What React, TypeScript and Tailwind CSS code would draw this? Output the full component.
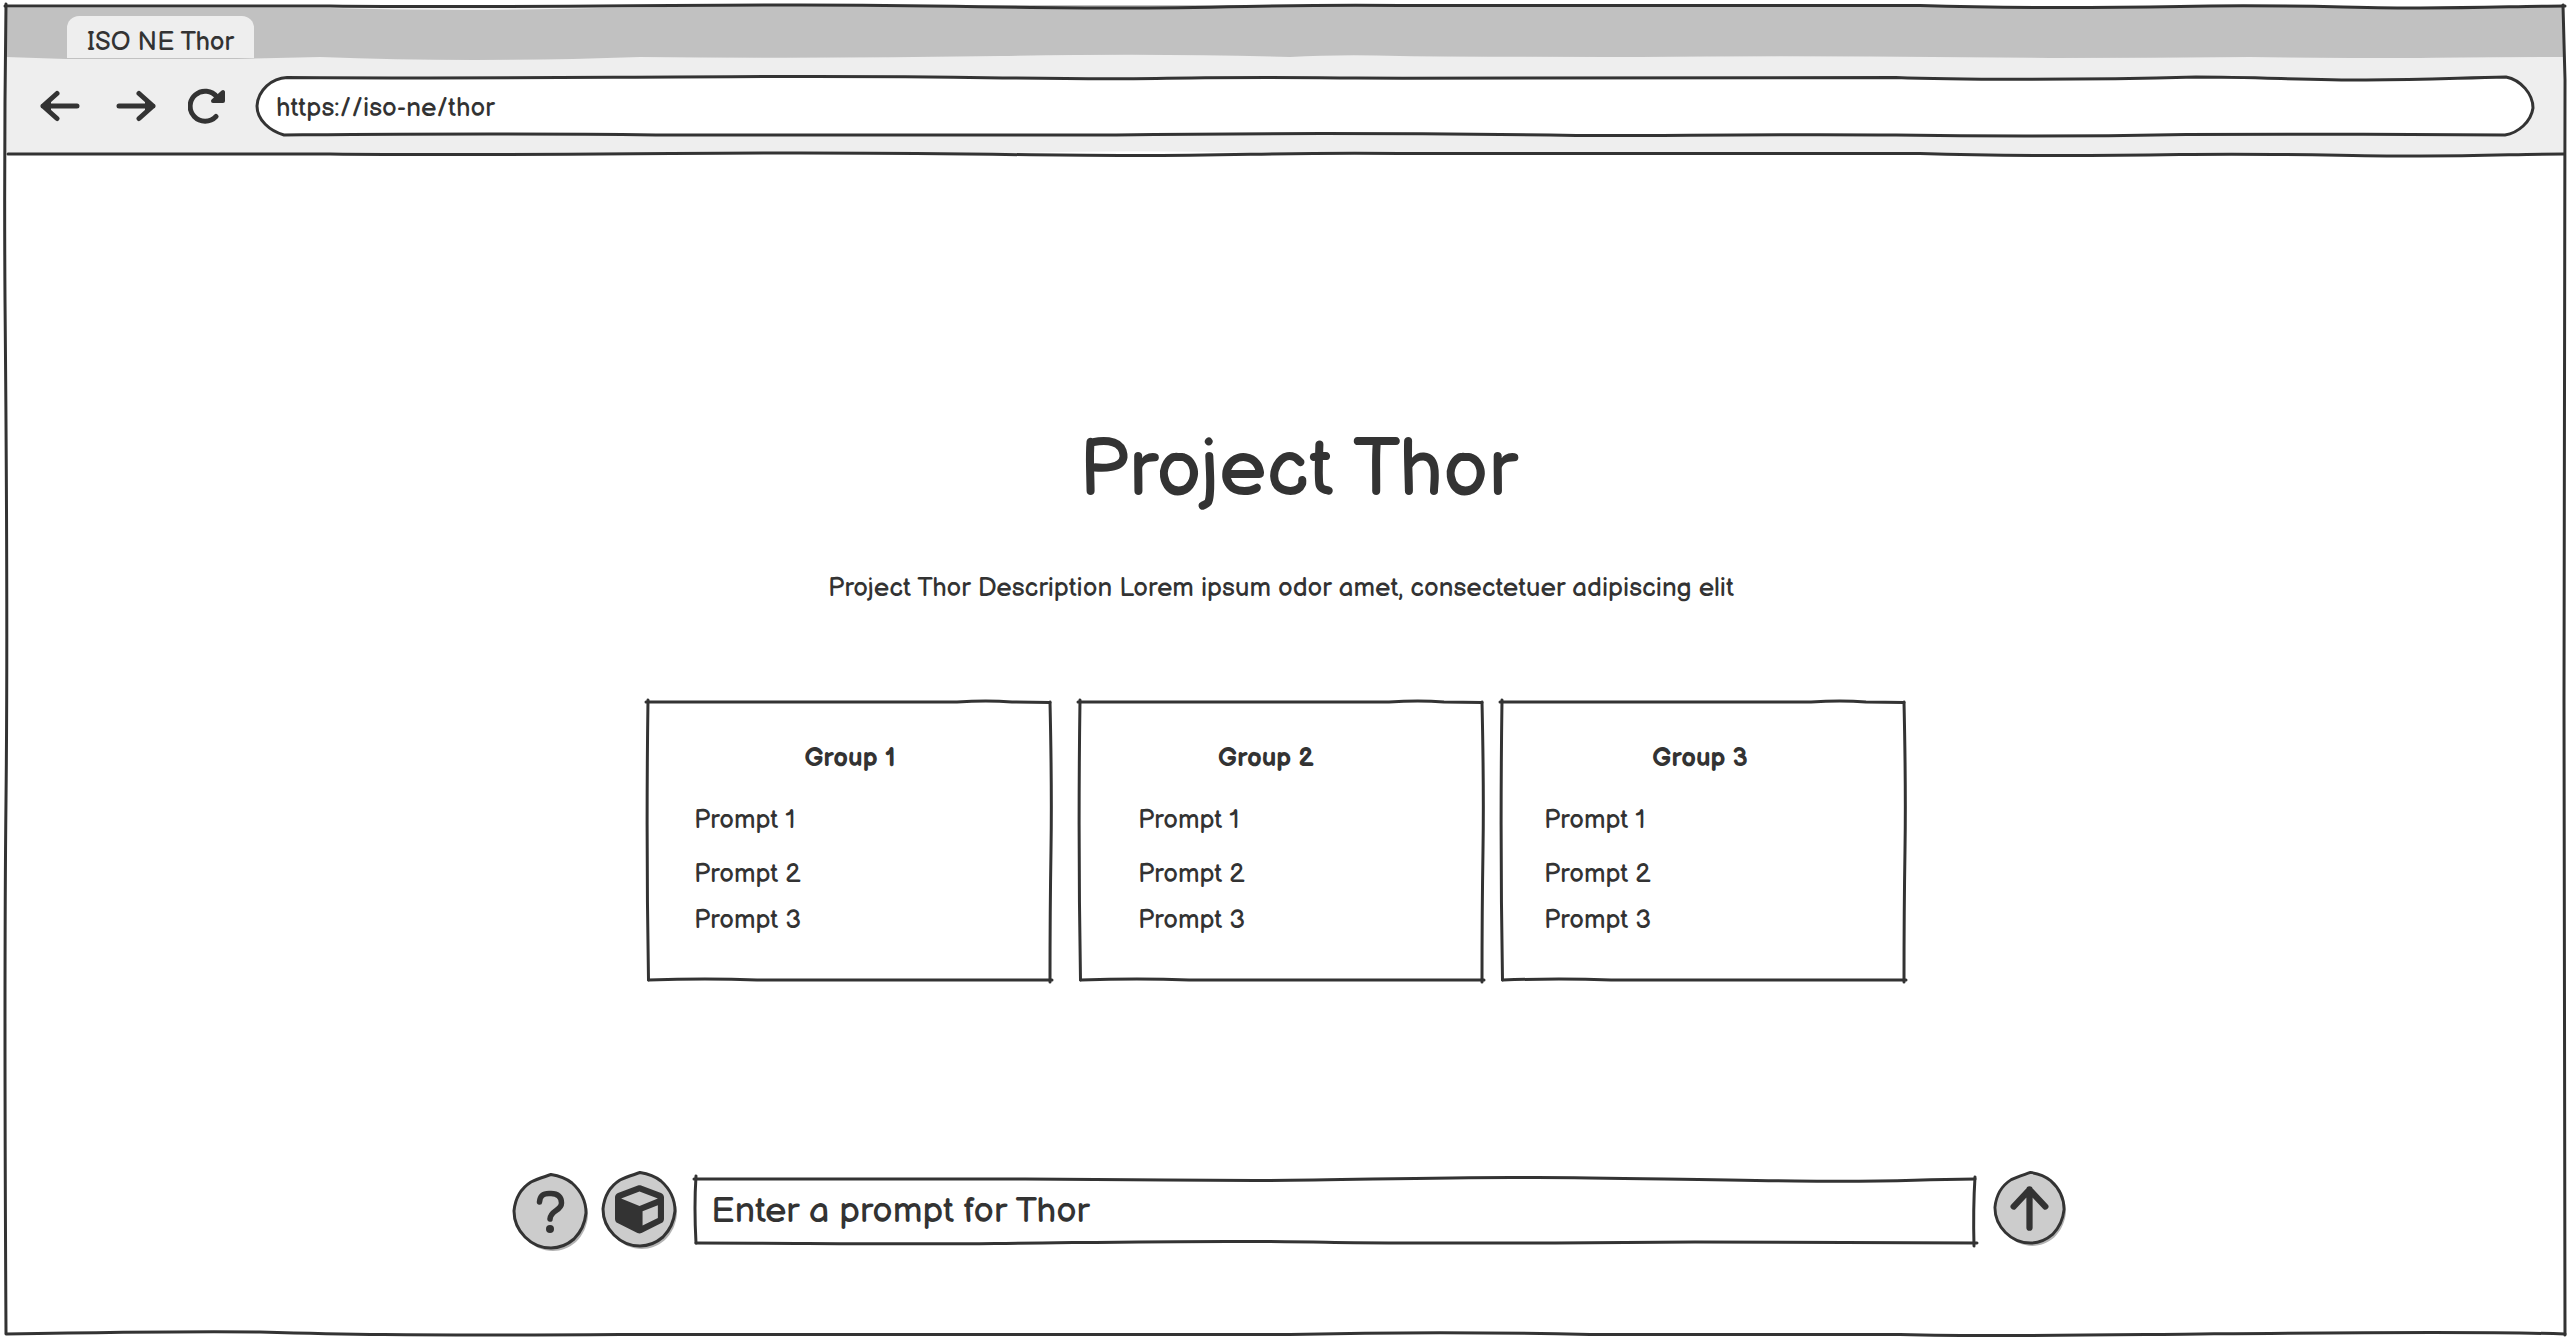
import type { ReactNode } from 'react';

const INK = '#333333';

type SketchProps = { viewBox: string; children: ReactNode };

/* Hand-drawn strokes laid over the box that contains them. */
function Sketch({ viewBox, children }: SketchProps) {
  return (
    <svg
      aria-hidden="true"
      viewBox={viewBox}
      preserveAspectRatio="none"
      fill="none"
      stroke={INK}
      strokeWidth="3"
      strokeLinecap="round"
      strokeLinejoin="round"
      className="pointer-events-none absolute inset-0 h-full w-full overflow-visible"
    >
      {children}
    </svg>
  );
}

function BackIcon() {
  return (
    <svg aria-hidden="true" viewBox="0 0 40 40" className="size-10" fill="none" stroke={INK} strokeWidth="5" strokeLinecap="round" strokeLinejoin="round">
      <path d="M3 20H37M17 7.5L3 20L17 32.5" />
      <path d="M3 20L10 14V26Z" fill={INK} strokeWidth="2" />
    </svg>
  );
}

function ForwardIcon() {
  return (
    <svg aria-hidden="true" viewBox="0 0 40 40" className="size-10" fill="none" stroke={INK} strokeWidth="5" strokeLinecap="round" strokeLinejoin="round">
      <path d="M37 20H3M23 7.5L37 20L23 32.5" />
      <path d="M37 20L30 14V26Z" fill={INK} strokeWidth="2" />
    </svg>
  );
}

function ReloadIcon() {
  return (
    <svg aria-hidden="true" viewBox="0 0 40 40" className="size-10" fill="none" stroke={INK} strokeWidth="5" strokeLinecap="round" strokeLinejoin="round">
      <path d="M28 30.5A15 15 0 1 1 29 11" />
      <path d="M35 6V15H25Z" fill={INK} strokeWidth="4" />
    </svg>
  );
}

type RoundProps = { label: string; size: string; type?: 'button' | 'submit'; children: ReactNode };

function RoundButton({ label, size, type = 'button', children }: RoundProps) {
  return (
    <button type={type} aria-label={label} className={'shrink-0 cursor-pointer ' + size}>
      <svg aria-hidden="true" viewBox="0 0 76 78" className="h-full w-full overflow-visible" fill="none">
        <path d="M39 3C49 4 55 7 60 11C69 19 74 30 74 41C73 51 69 60 62 67C55 73 47 76 39 76C29 76 20 72 13 65C6 58 2 49 2 39C3 28 8 17 19 10Z" fill="#b3b3b3" transform="translate(2 3)" />
        <path d="M39 2.5C49 4 55 7 60 11C69 19 74 30 74 41C73 51 69 60 62 67C55 73 47 76 39 76C29 76 20 72 13 65C6 58 2 49 2 39C3 28 8 17 19 10C25 7 32 5 39 2.5Z" fill="#cccccc" stroke={INK} strokeWidth="3" strokeLinejoin="round" />
        {children}
      </svg>
    </button>
  );
}

const groups = [
  { name: 'Group 1', box: 'mr-7', title: 'pl-0.5', list: 'pl-[46px]' },
  { name: 'Group 2', box: 'mr-[18px]', title: 'pr-[30px]', list: 'pl-[58px]' },
  { name: 'Group 3', box: '', title: 'pr-[6px]', list: 'pl-[42px]' },
];

function GroupCard({ name, box, title, list }: (typeof groups)[number]) {
  return (
    <section className={'relative w-[404px] px-px pt-[41px] pb-[41px] ' + box}>
      <Sketch viewBox="0 0 404 280">
        <path d="M-1 2H310Q340 0 365 2L403 2.5" />
        <path d="M1 0Q-1 140 1.5 280" />
        <path d="M403 2Q405 90 404 150T403 282" />
        <path d="M1.5 280Q60 278 110 280H405" />
      </Sketch>
      <h2 className={'text-center text-[26px] leading-9 font-bold ' + title}>{name}</h2>
      <ul className={'mt-[26px] text-[26px] leading-9 ' + list}>
        <li><a href="#prompt-1">Prompt 1</a></li>
        <li className="mt-[18px]"><a href="#prompt-2">Prompt 2</a></li>
        <li className="mt-2.5"><a href="#prompt-3">Prompt 3</a></li>
      </ul>
    </section>
  );
}

export default function App() {
  return (
    <div className="relative flex min-h-screen flex-col bg-white font-['Balsamiq_Sans','Lato',sans-serif] font-normal text-[#333333]">
      <header className="relative">
        <svg aria-hidden="true" viewBox="0 0 2570 154" preserveAspectRatio="none" className="absolute inset-0 h-full w-full">
          <path d="M6 8H2563V154H1290Q1150 149 1010 153H6Z" fill="#eeeeee" />
          <path d="M6 8H330Q460 12 600 8L800 5H1920L2100 8L2240 5L2420 8L2563 6V57Q2480 57 2420 58Q2330 58 2250 57Q2150 58 2050 58Q1800 55 1640 57Q1480 57 1400 56Q1340 54 1290 57Q1160 53 1000 56Q820 59 640 57Q470 63 320 57L237 59H66L6 57Z" fill="#c1c1c1" />
        </svg>
        <div className="relative flex h-[58px] items-end pl-[67px]">
          <div className="flex h-[42px] w-[187px] items-center justify-center rounded-t-xl bg-[#eeeeee] pt-3 text-[26px] leading-9">
            ISO NE Thor
          </div>
        </div>
        <nav aria-label="Browser" className="relative flex h-24 items-center pr-9 pl-10">
          <button type="button" aria-label="Back" className="mr-9 cursor-pointer"><BackIcon /></button>
          <button type="button" aria-label="Forward" className="mr-8 cursor-pointer"><ForwardIcon /></button>
          <button type="button" aria-label="Reload" className="mr-7 cursor-pointer"><ReloadIcon /></button>
          <div className="relative h-[60px] flex-1">
            <Sketch viewBox="0 0 2278 60">
              <path
                d="M31 1.5C250 3 330 1 530 0.5S780 4 900 2.5S980 1 1100 2S1300 0.5 1640 1.5C1700 4 1830 4 1940 1C2000 1 2050 4 2110 4S2200 2 2250 1C2265 4 2277 18 2277 32C2275 46 2262 57 2249 59C2150 58 2020 58 1930 58.5C1800 61 1700 60 1640 59C1500 58 1400 60 1320 59.5C1150 57 1000 57 860 59C600 60 500 59 400 59C250 57 150 58 28 59C14 55 1 44 1 30C2 14 16 2 31 1.5Z"
                fill="#ffffff"
              />
            </Sketch>
            <input
              aria-label="Address"
              defaultValue="https://iso-ne/thor"
              className="relative h-full w-full bg-transparent px-5 pt-1 text-[26px] leading-9 outline-none"
            />
          </div>
        </nav>
      </header>

      <main className="flex flex-1 flex-col items-center">
        <h1 className="mt-[269px] pl-[26px] text-[80px] leading-[96px]">Project Thor</h1>
        <p className="mt-[52px] pr-2 text-[26px] leading-9">
          Project Thor Description Lorem ipsum odor amet, consectetuer adipiscing elit
        </p>
        <div className="mt-[93px] flex pr-[18px]">
          {groups.map((group) => (
            <GroupCard key={group.name} {...group} />
          ))}
        </div>

        <form className="mt-[190px] flex w-full max-w-[1562px] items-start pl-2" onSubmit={(event) => event.preventDefault()}>
          <RoundButton label="Help" size="mt-0.5 mr-[13px] h-[78px] w-[76px]">
            <path d="M27.5 30C28 24 31 21.5 37 21.5H39C46 21.5 49.5 25 49.5 31C49.5 39 38.5 38 38 47" stroke={INK} strokeWidth="5.5" strokeLinecap="round" />
            <circle cx="38" cy="57" r="4" fill={INK} />
          </RoundButton>
          <RoundButton label="Models" size="mr-[18px] h-[78px] w-[76px]">
            <path
              transform="translate(14 15) scale(0.0957)"
              fill={INK}
              d="M239.1 6.3l-208 78c-18.7 7-31.1 25-31.1 45v225.1c0 18.2 10.3 34.8 26.5 42.9l208 104c13.5 6.8 29.4 6.8 42.9 0l208-104c16.3-8.1 26.5-24.8 26.5-42.9V129.3c0-20-12.4-37.9-31.1-44.9l-208-78C262 2.2 250 2.2 239.1 6.3zM256 68.4l192 72v1.1l-192 78-192-78v-1.1l192-72zm32 356V275.5l160-65v133.9l-160 80z"
            />
          </RoundButton>
          <div className="relative mt-[7px] mr-[17px] h-[68px] flex-1">
            <Sketch viewBox="0 0 1281 68">
              <path d="M-1 2H330C420 2 480 3.5 560 3.5S740 0 830 0.5C900 0 990 3 1100 4S1200 3 1280 2" />
              <path d="M1 -1Q-1 30 1 66" />
              <path d="M1 66C100 66 200 67.5 300 66.5S470 64 560 64.5S620 66 720 66S900 66 1000 65T1282 66" />
              <path d="M1280 0Q1278 32 1279 69" />
            </Sketch>
            <input
              aria-label="Prompt"
              placeholder="Enter a prompt for Thor"
              className="relative h-full w-full bg-transparent px-4 text-[36px] leading-[44px] outline-none placeholder:text-[#333333] placeholder:opacity-100"
            />
          </div>
          <RoundButton label="Send" type="submit" size="h-[75px] w-[73px]">
            <path d="M38 60V20M21.5 38L38 20.5L54.5 38" stroke={INK} strokeWidth="6.5" strokeLinecap="round" strokeLinejoin="round" />
            <path d="M38 20L31 28H45Z" fill={INK} />
          </RoundButton>
        </form>
      </main>

      <Sketch viewBox="0 0 2570 1340">
        <path d="M5 6H330C500 8 650 5 800 5S1000 8 1120 8S1280 4 1400 5.5S1700 5 1920 5.5C2000 8 2080 8 2180 6.5C2280 4 2350 8 2420 8S2520 6 2565 6" />
        <path d="M8 154H330C500 156 650 153 800 153S1000 155 1120 155.5S1280 152 1400 153.5S1700 153 1920 153.5C2000 156 2080 156 2180 154.5C2280 153 2350 156 2420 156S2520 154 2564 154" />
        <path d="M6 4Q4 150 5 300Q8 620 6 800T6 1333" />
        <path d="M2563 5L2565 80Q2565 500 2564 700T2565 1335" />
        <path d="M6 1334Q180 1331 260 1332C330 1334 400 1336 620 1334.5H1290Q1440 1331 1590 1334.5H1900C2000 1337 2100 1335 2200 1334S2480 1331 2565 1334" />
      </Sketch>
    </div>
  );
}
